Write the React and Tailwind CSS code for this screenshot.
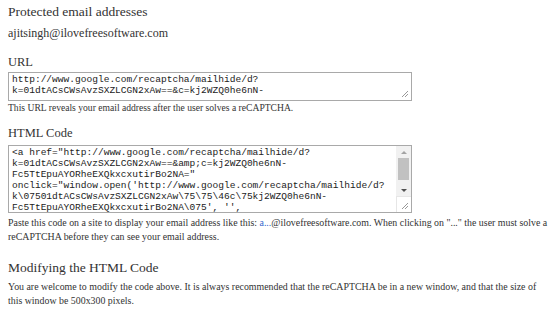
import React from "react";

const serif = { fontFamily: '"Liberation Serif", "Times New Roman", serif' };

const Grip = () => (
  <svg width="8" height="8" viewBox="0 0 8 8" className="absolute right-[2px] bottom-[2px]">
    <line x1="7" y1="1" x2="1" y2="7" stroke="#999" strokeWidth="1" />
    <line x1="7" y1="4" x2="4" y2="7" stroke="#999" strokeWidth="1" />
  </svg>
);

const CodeBox = ({ lines, height, scroll }) => (
  <div
    className={`relative flex w-[404px] border border-[#a9a9a9] bg-white overflow-hidden ${height}`}
  >
    <div className="flex-1 pl-[3px] pt-[1px] font-['Liberation_Mono',monospace] text-[9.55px] leading-[11px] text-[#222] whitespace-pre overflow-hidden">
      {lines.map((l, i) => (
        <div key={i}>{l}</div>
      ))}
    </div>
    {scroll ? (
      <div className="flex flex-col w-[15px] bg-[#f1f1f1]">
        <div className="flex h-[12px] items-center justify-center">
          <div className="w-0 h-0 border-l-[3px] border-r-[3px] border-b-[3px] border-l-transparent border-r-transparent border-b-[#a3a3a3]" />
        </div>
        <div className="mx-[2px] h-[22px] bg-[#c1c1c1]" />
        <div className="flex-1" />
        <div className="flex h-[12px] items-center justify-center">
          <div className="w-0 h-0 border-l-[3px] border-r-[3px] border-t-[3px] border-l-transparent border-r-transparent border-t-[#505050]" />
        </div>
        <div className="relative h-[16px] bg-white border-t border-l border-[#e6e6e6]">
          <Grip />
        </div>
      </div>
    ) : (
      <Grip />
    )}
  </div>
);

export default function App() {
  return (
    <div className="w-[550px] h-[318px] bg-white text-[#333] pl-[8px] pr-[2px] pt-[4px] overflow-hidden" style={serif}>
      <h2 className="text-[13.5px] leading-[16px]">Protected email addresses</h2>
      <p className="mt-[6px] text-[12px] leading-[14px]">ajitsingh@ilovefreesoftware.com</p>

      <h3 className="mt-[15px] text-[12.5px] leading-[14px]">URL</h3>
      <div className="mt-[3px]">
        <CodeBox
          height="h-[29px]"
          lines={[
            "http://www.google.com/recaptcha/mailhide/d?",
            "k=01dtACsCWsAvzSXZLCGN2xAw==&c=kj2WZQ0he6nN-",
          ]}
        />
      </div>
      <p className="mt-[1px] text-[9.6px] leading-[12px]">
        This URL reveals your email address after the user solves a reCAPTCHA.
      </p>

      <h3 className="mt-[12px] text-[12.5px] leading-[14px]">HTML Code</h3>
      <div className="mt-[5px]">
        <CodeBox
          height="h-[68px]"
          scroll
          lines={[
            '<a href="http://www.google.com/recaptcha/mailhide/d?',
            "k=01dtACsCWsAvzSXZLCGN2xAw==&amp;c=kj2WZQ0he6nN-",
            'Fc5TtEpuAYORheEXQkxcxutirBo2NA="',
            "onclick=\"window.open('http://www.google.com/recaptcha/mailhide/d?",
            "k\\07501dtACsCWsAvzSXZLCGN2xAw\\75\\75\\46c\\75kj2WZQ0he6nN-",
            "Fc5TtEpuAYORheEXQkxcxutirBo2NA\\075', '',",
          ]}
        />
      </div>
      <p className="mt-[3px] text-[9.9px] leading-[14px]">
        Paste this code on a site to display your email address like this:{" "}
        <span className="text-[#3366cc]">a...</span>@ilovefreesoftware.com. When clicking on "..." the user must solve a
        reCAPTCHA before they can see your email address.
      </p>

      <h2 className="mt-[16px] text-[13.5px] leading-[16px]">Modifying the HTML Code</h2>
      <p className="mt-[4px] text-[9.9px] leading-[14px]">
        You are welcome to modify the code above. It is always recommended that the reCAPTCHA be in a new window, and that
        the size of this window be 500x300 pixels.
      </p>
    </div>
  );
}
